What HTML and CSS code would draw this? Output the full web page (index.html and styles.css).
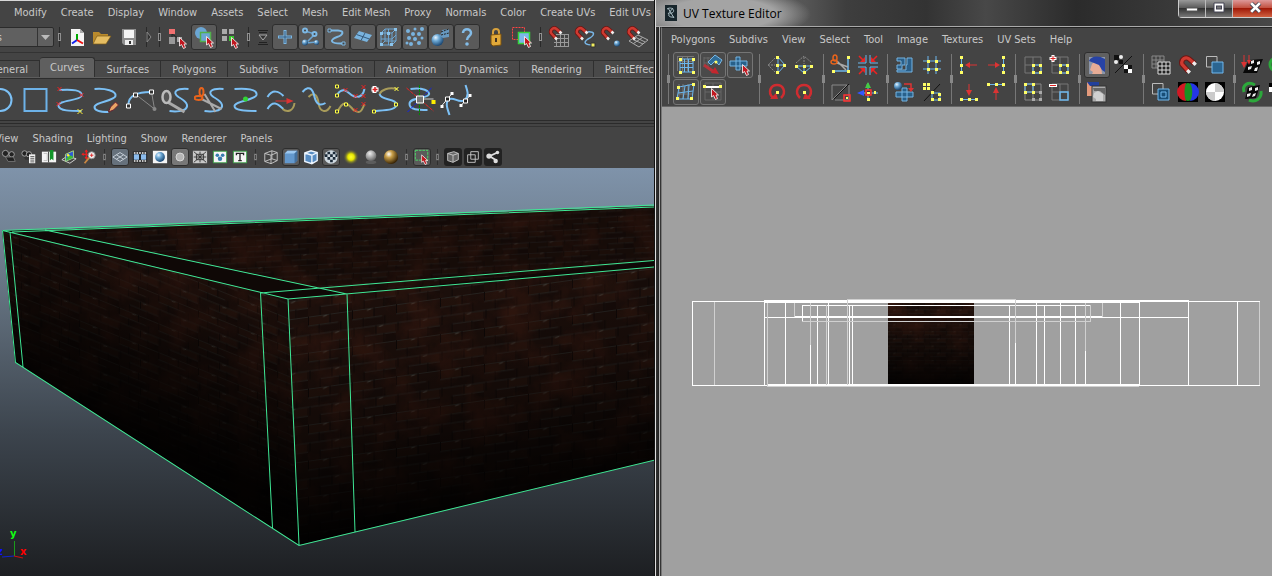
FILE: index.html
```html
<!DOCTYPE html>
<html lang="en">
<head>
    <meta charset="UTF-8">
    <meta name="viewport" content="width=device-width, initial-scale=1.0">
    <title>UV Texture Editor</title>
    <link rel="stylesheet" href="styles.css">
</head>
<body>
    <!-- shared shapes -->
    <svg class="defs" width="0" height="0">
        <defs>
            <symbol id="sep" viewBox="0 0 11 20"><path d="M5.500 0V20" stroke="#292929"/><rect x="4.500" y="6.500" width="2" height="7" fill="#333" stroke="#909090"/></symbol>
            <symbol id="cursor" viewBox="0 0 8 12"><path d="M.5 .5V9L2.500 7.500L4.500 11.500L6.500 10.500L5 7H7.500Z" fill="#c01820" stroke="#fff" stroke-width=".8"/></symbol>
            <symbol id="magnet" viewBox="0 0 16 16"><path d="M12.500 6.500L8.500 3C6 1 2 3 3 7L8 12.500" fill="none" stroke="#6d1512" stroke-width="4"/><path d="M12.500 6.500L8.500 3C6 1 2 3 3 7L8 12.500" fill="none" stroke="#cf3a31" stroke-width="2.500"/><path d="M11.500 5.500L13.500 7.500M7 11.500L9 13.500" stroke="#eee" stroke-width="2.500"/></symbol>
            <radialGradient id="ball" cx=".35" cy=".3" r=".7"><stop offset="0" stop-color="#e8f4ff"/><stop offset=".4" stop-color="#6eaad6"/><stop offset="1" stop-color="#1e4a75"/></radialGradient>
            <radialGradient id="grayBall" cx=".4" cy=".3" r=".7"><stop offset="0" stop-color="#eee"/><stop offset="1" stop-color="#666"/></radialGradient>
            <radialGradient id="goldBall" cx=".35" cy=".3" r=".7"><stop offset="0" stop-color="#fff"/><stop offset=".35" stop-color="#c9a04a"/><stop offset="1" stop-color="#3a2505"/></radialGradient>
            <radialGradient id="glow"><stop offset="0" stop-color="#ffff30"/><stop offset=".4" stop-color="#e6e600"/><stop offset="1" stop-color="#444" stop-opacity="0"/></radialGradient>
        </defs>
    </svg>

    <main class="main-window">
        <nav class="menu main-menu">
            <a href="#">Modify</a><a href="#">Create</a><a href="#">Display</a><a href="#">Window</a><a href="#">Assets</a><a href="#">Select</a><a href="#">Mesh</a><a href="#">Edit Mesh</a><a href="#">Proxy</a><a href="#">Normals</a><a href="#">Color</a><a href="#">Create UVs</a><a href="#">Edit UVs</a>
        </nav>

        <div class="status-line">
            <div class="mode-box">
                <select aria-label="Menu set"><option>Polygons</option></select>
                <svg viewBox="0 0 16 18"><path d="M.5 0V18" stroke="#333"/><path d="M4 7H13L8.500 12Z" fill="#bbb"/></svg>
            </div>
            <svg class="sep"><use href="#sep"/></svg>
            <button aria-label="New scene"><svg viewBox="0 0 24 24"><path d="M5 4H14L18 8V21H5Z" fill="#f4f4f4"/><path d="M14 4V8H18" fill="#aaa"/><path d="M11 9V15" stroke="#0a0" stroke-width="2"/><path d="M11 15L6 18.500" stroke="#12e" stroke-width="2"/><path d="M11 15L17 18.500" stroke="#e11" stroke-width="2"/></svg></button>
            <button aria-label="Open scene"><svg viewBox="0 0 24 24"><path d="M1 19V7H7L9 9H16V12H6Z" fill="#b98a2c"/><path d="M1 19L5 11H19L14 19Z" fill="#e5bd62" stroke="#7b5a17" stroke-width=".7"/></svg></button>
            <button aria-label="Save scene"><svg viewBox="0 0 24 24"><path d="M4 4H18V20H6L4 18Z" fill="#8e8e8e"/><rect x="6" y="5" width="10" height="8" fill="#f5f5f5"/><rect x="7" y="15" width="8" height="5" fill="#eee"/><rect x="11" y="16" width="2" height="3" fill="#333"/></svg></button>
            <svg class="sep" viewBox="0 0 11 20"><path d="M3.500 0V20" stroke="#2a2a2a"/><path d="M4 5L8 10L4 15Z" fill="#333" stroke="#888"/></svg>
            <svg class="sep"><use href="#sep"/></svg>
            <button aria-label="Select by hierarchy"><svg viewBox="0 0 24 24"><path d="M6 9V18M6 9L15 15" stroke="#222"/><rect x="3" y="4" width="6" height="5" fill="#f07070"/><rect x="3" y="12" width="6" height="7" fill="#999"/><rect x="11" y="12" width="5" height="5" fill="#aaa"/><use href="#cursor" x="13" y="12" width="8" height="12"/></svg></button>
            <button class="on" aria-label="Select by object"><svg viewBox="0 0 24 24"><circle cx="9" cy="8" r="6" fill="#6ba6d4"/><rect x="8.500" y="7.500" width="10" height="9" fill="#6ba6d4" stroke="#52b04c" stroke-width="1.500"/><use href="#cursor" x="14" y="11" width="8" height="12"/></svg></button>
            <button aria-label="Select by component"><svg viewBox="0 0 24 24"><path d="M4 4H9V9H4ZM11 4H16V9H11ZM4 11H9V16H4Z" fill="#aaa"/><rect x="11" y="11" width="5" height="5" fill="#39c42c"/><use href="#cursor" x="13" y="12" width="8" height="12"/></svg></button>
            <svg class="sep"><use href="#sep"/></svg>
            <svg class="collapse" viewBox="0 0 18 22"><path d="M4 4.500H14M5 6.500H13M5 16.500H13M4 18.500H14" stroke="#222"/><path d="M5 9H13L9 14Z" fill="#333" stroke="#aaa"/></svg>
            <button class="on" aria-label="Handles"><svg viewBox="0 0 24 24"><path d="M12 5V19M5 12H19" stroke="#7db8e4" stroke-width="3"/><path d="M12 6V18M6 12H18" stroke="#36597a"/></svg></button>
            <button class="on" aria-label="Joints"><svg viewBox="0 0 24 24"><path d="M6 6L16 9L7 18L17 17" fill="none" stroke="#6ca6d3" stroke-width="1.500"/><g fill="#444" stroke="#7db8e4" stroke-width="2"><circle cx="6" cy="5.500" r="2"/><circle cx="15.500" cy="9" r="2"/></g><circle cx="6" cy="17.500" r="3" fill="url(#ball)"/><circle cx="17.500" cy="17.500" r="2.500" fill="url(#ball)"/></svg></button>
            <button class="on" aria-label="Curves"><svg viewBox="0 0 24 24"><path d="M5 5.500H13C20 6 18 10 12 12C4 15 5 19 18 18.500" fill="none" stroke="#7db8e4" stroke-width="2"/><path d="M3 4H6V7H3ZM17 17H20V20H17Z" fill="#444" stroke="#7db8e4"/></svg></button>
            <button class="on" aria-label="Surfaces"><svg viewBox="0 0 24 24"><path d="M3 13L8 6L21 10L16 17Z" fill="#79b3de"/><path d="M5.500 9.500L18.500 14M14 8L10 15.500" stroke="#36597a"/></svg></button>
            <button class="on" aria-label="Deformers"><svg viewBox="0 0 24 24"><path d="M4 8H15V20H4ZM8 4H19V16H8ZM4 8L8 4M15 8L19 4M15 20L19 16M4 20L8 16M4 14H15L19 10M11.500 4V20" fill="none" stroke="#6ca6d3"/><path d="M3 7H6V10H3ZM10 7H13V10H10ZM17 3H20V6H17ZM3 18H6V21H3ZM13 18H16V21H13Z" fill="#8ac4ed"/></svg></button>
            <button class="on" aria-label="Dynamics"><svg viewBox="0 0 24 24"><g fill="#79b3de"><circle cx="5" cy="6" r="2"/><circle cx="12" cy="4" r="1.500"/><circle cx="19" cy="4" r="2"/><circle cx="10" cy="9" r="2"/><circle cx="16" cy="9" r="2"/><circle cx="6" cy="13" r="2"/><circle cx="12" cy="14" r="2"/><circle cx="19" cy="13" r="1.500"/><circle cx="8" cy="19" r="2"/><circle cx="4" cy="18" r="1.500"/><circle cx="16" cy="18" r="2"/></g></svg></button>
            <button class="on" aria-label="Rendering"><svg viewBox="0 0 24 24"><circle cx="8.500" cy="15" r="6" fill="url(#ball)"/><path d="M11 11L13 5L20 4V12L14 13Z" fill="#6799c0"/><path d="M12 7L20 4M12 10L20 8" stroke="#222" stroke-dasharray="2 1"/></svg></button>
            <button class="on" aria-label="Miscellaneous"><svg viewBox="0 0 24 24"><path d="M8 8C8 3 16 3 16 8C16 11 12 11 12 15" fill="none" stroke="#83bce8" stroke-width="2.500"/><circle cx="12" cy="19" r="1.800" fill="#83bce8"/></svg></button>
            <button class="gap" aria-label="Lock selection"><svg viewBox="0 0 24 24"><path d="M9 11V7C9 3 15 3 15 7V11" fill="none" stroke="#d8a23c" stroke-width="2"/><path d="M7 10L17 9V20L9 21L7 19Z" fill="#e2a939" stroke="#7b5210"/><path d="M12 13V17" stroke="#432" stroke-width="2"/></svg></button>
            <button aria-label="Highlight selection"><svg viewBox="0 0 24 24"><rect x="2.500" y="2.500" width="12" height="12" fill="none" stroke="#f44" stroke-dasharray="2 1"/><rect x="8.500" y="7.500" width="11" height="11" fill="#7cb7e8" stroke="#35d43b" stroke-width="1.500"/><use href="#cursor" x="14" y="11" width="8" height="12"/></svg></button>
            <svg class="sep"><use href="#sep"/></svg>
            <button aria-label="Snap to grids"><svg viewBox="0 0 24 24"><path d="M9 9.500H22M9 13.500H22M7 17.500H22M7 21.500H22M9.500 12V22M13.500 9V22M17.500 9V22M21.500 9V22" stroke="#999"/><use href="#magnet" x="1" y="1" width="16" height="16"/></svg></button>
            <button aria-label="Snap to curves"><svg viewBox="0 0 24 24"><path d="M14 7C24 6 21 11 15 14C9 18 13 20 20 20" fill="none" stroke="#78b5e5" stroke-width="1.500"/><path d="M18 18H22V22H18Z" fill="#f1ed60" stroke="#333"/><use href="#magnet" x="1" y="1" width="16" height="16"/></svg></button>
            <button aria-label="Snap to points"><svg viewBox="0 0 24 24"><circle cx="18" cy="18.500" r="3" fill="url(#ball)"/><use href="#magnet" x="1" y="1" width="16" height="16"/></svg></button>
            <button aria-label="Snap to view planes"><svg viewBox="0 0 24 24"><path d="M4 16L13 10L23 15L14 22ZM7 14L18 19M10 12L20 17M8.500 18.500L17.500 12.500" fill="none" stroke="#aaa"/><use href="#magnet" x="1" y="1" width="16" height="16"/></svg></button>
        </div>

        <div class="shelf-tabs" role="tablist">
            <button role="tab">General</button><button role="tab" aria-selected="true">Curves</button><button role="tab">Surfaces</button><button role="tab">Polygons</button><button role="tab">Subdivs</button><button role="tab">Deformation</button><button role="tab">Animation</button><button role="tab">Dynamics</button><button role="tab">Rendering</button><button role="tab">PaintEffects</button>
        </div>

        <div class="shelf">
            <button aria-label="Circle"><svg viewBox="0 0 32 32"><circle cx="16" cy="16" r="11" fill="none" stroke="#7cc0f5" stroke-width="2"/></svg></button>
            <button aria-label="Square"><svg viewBox="0 0 32 32"><rect x="5" y="5" width="22" height="22" fill="none" stroke="#6db2e8" stroke-width="2"/></svg></button>
            <button aria-label="EP curve"><svg viewBox="0 0 32 32"><path d="M5 6C17 5 29 6 27 12C25 17 3 16 4 22C5 27 16 27 27 27" fill="none" stroke="#7cc0f5" stroke-width="2"/><path d="M3 3L7 7M7 3L3 7M25 9L29 13M29 9L25 13M2 18L6 22M6 18L2 22" stroke="#e22"/><path d="M23 25L28 30M28 25L23 30" stroke="#fe3"/></svg></button>
            <button aria-label="Pencil curve"><svg viewBox="0 0 32 32"><path d="M5 5C16 4 27 7 26 12C25 17 5 18 5 23C5 27 13 28 19 28" fill="none" stroke="#7cc0f5" stroke-width="2"/><path d="M19 28L21 23L26 18L29 21L24 26Z" fill="#e9a565" stroke="#623"/></svg></button>
            <button aria-label="Arc"><svg viewBox="0 0 32 32"><path d="M27 8L30 25L12 11" fill="none" stroke="#888"/><path d="M4 22C3 11 14 8 26 8" fill="none" stroke="#7cc0f5" stroke-width="2"/><path d="M2 20H6V24H2ZM9 9H13V13H9ZM25 6H29V10H25Z" fill="#333" stroke="#fff"/><circle cx="30" cy="25" r="2" fill="#888"/></svg></button>
            <button aria-label="Attach curves"><svg viewBox="0 0 32 32"><path d="M29 5C17 4 12 8 19 13C26 17 30 21 26 25C24 27 17 28 10 27" fill="none" stroke="#7cc0f5" stroke-width="2"/><path d="M8 18L25 28" stroke="#aaa" stroke-width="3"/><ellipse cx="7" cy="13" rx="4" ry="6" fill="#555" stroke="#bbb" stroke-width="2.500"/></svg></button>
            <button aria-label="Detach curves"><svg viewBox="0 0 32 32"><path d="M29 5C17 4 12 8 19 13C26 17 30 21 26 25C24 27 17 28 10 27" fill="none" stroke="#7cc0f5" stroke-width="2"/><path d="M10 10L21 28M7 15L27 25" stroke="#aaa" stroke-width="2"/><ellipse cx="7" cy="8" rx="2" ry="4" fill="none" stroke="#e9641c" stroke-width="2"/><ellipse cx="4" cy="14" rx="4" ry="2" fill="none" stroke="#e9641c" stroke-width="2"/></svg></button>
            <button aria-label="Insert knot"><svg viewBox="0 0 32 32"><path d="M5 5C16 4 28 5 27 11C26 16 5 17 5 22C5 27 18 27 27 27" fill="none" stroke="#7cc0f5" stroke-width="2"/><circle cx="16" cy="15" r="2.500" fill="#32d436"/></svg></button>
            <button aria-label="Extend curve"><svg viewBox="0 0 32 32"><path d="M3 13C8 5 14 7 19 12M3 25C9 15 14 21 19 25" fill="none" stroke="#7cc0f5" stroke-width="2"/><path d="M18 25C23 29 29 27 30 19" fill="none" stroke="#a89b5a" stroke-width="2"/><path d="M11 17H24" stroke="#d33"/><path d="M22 14L29 17L22 20Z" fill="#d33"/></svg></button>
            <button aria-label="Offset curve"><svg viewBox="0 0 32 32"><path d="M9 13C15 7 18 12 19 19C20 28 27 30 31 22" fill="none" stroke="#a89b5a" stroke-width="2"/><path d="M3 8C11 -1 14 8 15 13C17 21 21 22 26 19" fill="none" stroke="#7cc0f5" stroke-width="2"/></svg></button>
            <button aria-label="Align curves"><svg viewBox="0 0 32 32"><path d="M3 10C11 0 15 13 22 13C27 13 29 10 30 5" fill="none" stroke="#7cc0f5" stroke-width="2"/><path d="M3 28C9 14 14 20 19 26C25 30 27 28 30 20" fill="none" stroke="#a89b5a" stroke-width="2"/><path d="M1 1H4V4H1ZM1 10H4V13H1ZM1 26H4V29H1ZM10 19H13V22H10Z" fill="#333" stroke="#ff4"/><path d="M9 4L13 8M13 4L9 8M19 10L23 14M23 10L19 14M27 1L31 5M31 1L27 5M27 10L31 14M31 10L27 14M19 24L23 28M23 24L19 28M27 18L31 22M31 18L27 22" stroke="#e22"/></svg></button>
            <button aria-label="Add points"><svg viewBox="0 0 32 32"><path d="M28 5C18 3 12 6 10 10" fill="none" stroke="#a89b5a" stroke-width="2"/><path d="M10 10C12 17 26 14 27 20C27 26 18 26 5 27" fill="none" stroke="#7cc0f5" stroke-width="2"/><path d="M5 2V9M2 5.500H9" stroke="#fff" stroke-width="4"/><path d="M5.500 3V8M3 5.500H8" stroke="#d22" stroke-width="1.500"/><path d="M25 19H28V22H25ZM3 26H6V29H3Z" fill="#333" stroke="#ff4"/><path d="M25 3L29 7M29 3L25 7" stroke="#ff4"/></svg></button>
            <button aria-label="Curve editing"><svg viewBox="0 0 32 32"><path d="M6 5C17 3 27 7 24 11C21 15 5 13 5 20C5 26 14 26 23 26" fill="none" stroke="#7cc0f5" stroke-width="2"/><path d="M15 1V31" stroke="#080" stroke-dasharray="3 1"/><path d="M2 4L29 27" stroke="#e22" stroke-dasharray="4 1"/><path d="M27 4L3 28" stroke="#12e" stroke-dasharray="4 1"/><path d="M16 15H29" stroke="#ccc"/><path d="M12 12H19V19H12Z" fill="#777" stroke="#fff"/><rect x="27" y="16" width="4" height="4" fill="#fe0"/></svg></button>
            <button aria-label="Bezier curve"><svg viewBox="0 0 32 32"><path d="M10 31C8 25 5 18 10 15C15 13 20 20 25 16C30 12 28 7 26 1" fill="none" stroke="#7cc0f5" stroke-width="2"/><path d="M2 22L13 9M21 22L31 11" stroke="#eee"/><path d="M6 13H10V17H6ZM24 15H28V19H24Z" fill="#222" stroke="#fff"/><path d="M1 21H4V24H1ZM11 8H14V11H11ZM20 20H23V23H20ZM29 10H32V13H29Z" fill="#fff"/></svg></button>
        </div>

        <nav class="menu panel-menu">
            <a href="#">View</a><a href="#">Shading</a><a href="#">Lighting</a><a href="#">Show</a><a href="#">Renderer</a><a href="#">Panels</a>
        </nav>

        <div class="panel-tools">
            <button aria-label="Select camera"><svg viewBox="0 0 18 18"><circle cx="5" cy="5" r="3.500" fill="#222" stroke="#aaa"/><circle cx="12" cy="6" r="3" fill="#222" stroke="#aaa"/><path d="M5 9L14 9L16 14L8 14Z" fill="#222" stroke="#777"/></svg></button>
            <button aria-label="Camera attributes"><svg viewBox="0 0 18 18"><circle cx="4" cy="5" r="3" fill="#222" stroke="#aaa"/><circle cx="9" cy="6" r="3" fill="#222" stroke="#aaa"/><path d="M3 9H9V12H5Z" fill="#333"/><path d="M9 6H16V16H9Z" fill="#f2f2f2"/><path d="M10.500 8.500H15M10.500 10.500H15M10.500 12.500H15M10.500 14.500H15" stroke="#555"/></svg></button>
            <button aria-label="Bookmarks"><svg viewBox="0 0 18 18"><path d="M1 3H17V15H1Z" fill="#f4f4f4"/><path d="M3 5H7V13H3" fill="none" stroke="#bbb"/><path d="M8.500 3V15" stroke="#333"/><path d="M10 1H14V13L12 11L10 13Z" fill="#12962a"/></svg></button>
            <button aria-label="Image plane"><svg viewBox="0 0 18 18"><path d="M1 12L7 8L17 11L10 16Z" fill="none" stroke="#ddd"/><path d="M5 6L14 2V10L5 14Z" fill="#2f57d8" stroke="#aee07c"/><path d="M6 11L9 7L13 8V10L6 13Z" fill="#3bbf2f"/><circle cx="8" cy="7" r="1.500" fill="#fe3"/></svg></button>
            <button aria-label="Pan and zoom"><svg viewBox="0 0 18 18"><path d="M6 1V11M1 6H11" stroke="#d22" stroke-width="1.500"/><path d="M4 3L6 .500L8 3ZM4 9L6 12L8 9ZM3 4L.500 6L3 8Z" fill="#e22"/><circle cx="12" cy="7" r="4" fill="#eee" stroke="#888"/><path d="M12 5V9M10 7H14" stroke="#d22"/><path d="M9 10L4 16" stroke="#c98742" stroke-width="2"/></svg></button>
            <svg class="sep"><use href="#sep"/></svg>
            <button class="on cool" aria-label="Grid"><svg viewBox="0 0 18 18"><path d="M1 9L9 4L17 9L9 14ZM5 6.500L13 11.500M13 6.500L5 11.500" fill="none" stroke="#cdd6df"/></svg></button>
            <button aria-label="Film gate"><svg viewBox="0 0 18 18"><rect x="1" y="3" width="16" height="12" fill="#111"/><path d="M2 4.500H17M2 13.500H17" stroke="#fff" stroke-width="1.500" stroke-dasharray="2 1"/><path d="M2 6H8V12H2ZM10 6H16V12H10Z" fill="#8cbced"/></svg></button>
            <button aria-label="Resolution gate"><svg viewBox="0 0 18 18"><rect x="1" y="2" width="16" height="14" fill="#f5f5f5"/><circle cx="9" cy="9" r="5.500" fill="url(#ball)"/></svg></button>
            <button class="on light" aria-label="Gate mask"><svg viewBox="0 0 18 18"><circle cx="9" cy="9" r="4.500" fill="#b5b5b5" stroke="#ddd"/></svg></button>
            <button aria-label="Field chart"><svg viewBox="0 0 18 18"><rect x="1" y="2" width="16" height="14" fill="#c8c8c8"/><path d="M2 3L16 15M16 3L2 15M9 3V15M2 9H16M5 6H13V12H5Z" fill="none" stroke="#333"/></svg></button>
            <button aria-label="Safe action"><svg viewBox="0 0 18 18"><rect x="1.500" y="2.500" width="15" height="13" fill="#f5f5f5" stroke="#3da348"/><circle cx="6" cy="7" r="2" fill="#367cae"/><circle cx="12" cy="7" r="2" fill="#367cae"/><circle cx="9" cy="11" r="2.500" fill="#367cae"/></svg></button>
            <button aria-label="Safe title"><svg viewBox="0 0 18 18"><rect x="1.500" y="2.500" width="15" height="13" fill="#f5f5f5" stroke="#3da348"/><path d="M5 7V5H13V7M9 5V13M7 13H11" fill="none" stroke="#222" stroke-width="1.500"/></svg></button>
            <svg class="sep"><use href="#sep"/></svg>
            <button aria-label="Wireframe"><svg viewBox="0 0 18 18"><path d="M2 5L10 2L16 4V13L9 16.500L2 14ZM2 5L9 7L16 4M9 7V16.500M10 2V11L2 14M10 11L16 13" fill="none" stroke="#ccc"/></svg></button>
            <button class="on" aria-label="Shaded"><svg viewBox="0 0 18 18"><path d="M2 5L5 2H16V13L13 16H2Z" fill="#6398cd"/><path d="M2 5L5 2H16L13 5Z" fill="#9cc7ef"/><path d="M13 5L16 2V13L13 16Z" fill="#43709e"/></svg></button>
            <button aria-label="Wireframe on shaded"><svg viewBox="0 0 18 18"><path d="M2 4.500L9 2L16 4V13L10 16.500L2 14Z" fill="#578cc2"/><path d="M2 4.500L9 2L16 4V13L10 16.500L2 14ZM2 4.500L10 7L16 4M10 7V16.500" fill="none" stroke="#eef6ff" stroke-width="1.500"/></svg></button>
            <button class="on" aria-label="Textured"><svg viewBox="0 0 18 18"><circle cx="9" cy="9" r="7.500" fill="#cfd9e0"/><path d="M5 3H8V6H5ZM11 3H14V6H11ZM2 6H5V9H2ZM8 6H11V9H8ZM5 9H8V12H5ZM11 9H14V12H11ZM8 12H11V15H8ZM14 6H16V9H14Z" fill="#1b2a38"/></svg></button>
            <button aria-label="Use all lights"><svg viewBox="0 0 18 18"><circle cx="9" cy="9" r="9" fill="url(#glow)"/></svg></button>
            <button aria-label="Shadows"><svg viewBox="0 0 18 18"><ellipse cx="9" cy="15" rx="6" ry="2" fill="#5c5c5c"/><circle cx="9" cy="7.500" r="6" fill="url(#grayBall)"/></svg></button>
            <button aria-label="High quality"><svg viewBox="0 0 18 18"><circle cx="9" cy="9" r="8" fill="url(#goldBall)"/></svg></button>
            <svg class="sep"><use href="#sep"/></svg>
            <button class="on" aria-label="Isolate select"><svg viewBox="0 0 18 18"><rect x="1.500" y="1.500" width="14" height="11" fill="none" stroke="#4ae668" stroke-dasharray="3 1"/><use href="#cursor" x="8" y="6" width="8" height="12"/></svg></button>
            <svg class="sep"><use href="#sep"/></svg>
            <button class="dark" aria-label="X-ray"><svg viewBox="0 0 18 18"><path d="M3 5L10 3L15 5V12L9 15L3 13Z" fill="#666"/><path d="M3 5L10 3L15 5V12L9 15L3 13ZM3 5L9 7L15 5M9 7V15" fill="none" stroke="#ccc"/></svg></button>
            <button class="dark" aria-label="X-ray components"><svg viewBox="0 0 18 18"><path d="M3 6.500H11.500V15H3ZM6.500 3H15V11.500H6.500Z" fill="none" stroke="#ccc"/></svg></button>
            <button class="dark" aria-label="X-ray joints"><svg viewBox="0 0 18 18"><path d="M14 4L5 8L13 13" fill="none" stroke="#ddd" stroke-width="2"/><circle cx="14" cy="4" r="2" fill="#ddd"/><circle cx="4.500" cy="8" r="3" fill="#ddd"/><circle cx="12" cy="13.500" r="2.500" fill="#ddd"/></svg></button>
        </div>

        <svg class="viewport" viewBox="0 168 654 408" preserveAspectRatio="xMinYMin slice" role="img" aria-label="Perspective view">
            <defs>
                <pattern id="brick" width="44" height="36" patternUnits="userSpaceOnUse">
                    <rect width="44" height="36" fill="#1c0f0b"/>
                    <rect x="1" y="1" width="20" height="8" fill="#22120c"/>
                    <rect x="12" y="10" width="20" height="8" fill="#180d0a"/>
                    <rect x="23" y="19" width="20" height="8" fill="#24130d"/>
                    <rect x="33" y="28" width="11" height="8" fill="#170c09"/>
                    <path d="M0 .5H44M0 9.500H30M0 18.500H44M12 27.500H44" stroke="#262320"/>
                    <path d="M.5 0V9M22 0V9M11 9V18M33 9V18M2 18V27M24 18V27M12 27V36M32 27V36" stroke="#0e0807"/>
                    <path d="M15 2L19 1M27 20L31 19" stroke="#45403a"/>
                </pattern>
                <pattern id="brickLeft" href="#brick" patternTransform="skewY(22) scale(.9 .8)"/>
                <pattern id="brickFront" href="#brick" patternTransform="skewY(-8)"/>
                <pattern id="brickBack" href="#brick" patternTransform="skewY(-3) scale(.8 .6)"/>
                <linearGradient id="fadeLeft" gradientUnits="userSpaceOnUse" x1="170" y1="270" x2="105" y2="420"><stop offset="0" stop-opacity=".15"/><stop offset="1" stop-opacity=".92"/></linearGradient>
                <linearGradient id="fadeFront" gradientUnits="userSpaceOnUse" x1="440" y1="285" x2="480" y2="510"><stop offset="0" stop-opacity="0"/><stop offset=".5" stop-opacity=".3"/><stop offset="1" stop-opacity=".95"/></linearGradient>
                <filter id="grain" x="0" y="0" width="100%" height="100%" color-interpolation-filters="sRGB">
                    <feTurbulence type="fractalNoise" baseFrequency=".03" numOctaves="6" seed="8"/>
                    <feColorMatrix values="0 0 0 0 .25  0 0 0 0 .11  0 0 0 0 .07  2.5 0 0 0 -1"/>
                    <feComposite in2="SourceGraphic" operator="in"/>
                </filter>
            </defs>
            <path d="M45 230L655 206V263L347 294Z" fill="url(#brickBack)"/>
            <path d="M2 230L288 299L299 545L15 362Z" fill="url(#brickLeft)"/>
            <path d="M288 299L655 266V460L299 545Z" fill="url(#brickFront)"/>
            <path d="M2 230L655 206V460L299 545L15 362Z" filter="url(#grain)" opacity=".5"/>
            <path d="M45 230L655 206V263L347 294Z" opacity=".2"/>
            <path d="M2 230L288 299L299 545L15 362Z" fill="url(#fadeLeft)"/>
            <path d="M288 299L655 266V460L299 545Z" fill="url(#fadeFront)"/>
            <path d="M2 230L45 230L347 294L655 261V267L288 299Z" fill="#0f0806"/>
            <path class="edge" d="M2.500 230.500L655 205M12 232L655 207M2.500 230.500L288 299L655 267M45 230L347 294M260 293L655 260.500M2.500 230.500L15.500 362.500L299 545.500L655 460M10 232L23 367M260.500 293L272.500 528M288 299L299 545M347 294L355 532"/>
            <path d="M14.500 541V556" stroke="#1b9c1b"/><path d="M14 556L23 558" stroke="#c11"/><path d="M14 556L2 557" stroke="#12c"/>
            <g class="axis"><text x="10" y="537" fill="#1f1">y</text><text x="20" y="555" fill="#f00">x</text><text x="-3" y="555" fill="#11f">z</text></g>
        </svg>
    </main>

    <section class="uv-window">
        <header class="title-bar">
            <svg class="app-icon" viewBox="0 0 12 16"><rect width="12" height="16" fill="#18262c"/><path d="M2 4C7 1 11 6 7 8C1 9 4 13 9 12M3 3L9 13M8 3L3 9" fill="none" stroke="#a9bcc2"/></svg>
            <h1>UV Texture Editor</h1>
            <div class="window-buttons">
                <button aria-label="Minimize"><svg viewBox="0 0 14 12"><rect x="1.500" y="6.500" width="11" height="3" fill="#fff" stroke="#555"/></svg></button>
                <button aria-label="Maximize"><svg viewBox="0 0 14 12"><path d="M2 1.500H12V10.500H2Z" fill="#fff" stroke="#445"/><rect x="4.500" y="4.500" width="5" height="3" fill="#777" stroke="#445"/></svg></button>
                <button class="close" aria-label="Close"><svg viewBox="0 0 14 12"><path d="M3 2L11 10M11 2L3 10" stroke="#445" stroke-width="4"/><path d="M3 2L11 10M11 2L3 10" stroke="#fff" stroke-width="2.500"/></svg></button>
            </div>
        </header>

        <div class="uv-body">
            <nav class="menu uv-menu">
                <a href="#">Polygons</a><a href="#">Subdivs</a><a href="#">View</a><a href="#">Select</a><a href="#">Tool</a><a href="#">Image</a><a href="#">Textures</a><a href="#">UV Sets</a><a href="#">Help</a>
            </nav>

            <div class="uv-tools">
                <div class="group">
                    <button class="on" aria-label="Lattice"><svg viewBox="0 0 24 24"><path d="M3.500 3V18M8.500 3V18M13.500 3V18M3 3.500H20M3 8.500H20" stroke="#777"/><path d="M6 6H19V19H6ZM6 10.500H19M6 14.500H19M10.500 6V19M14.500 6V19" fill="none" stroke="#6cb6ec"/><path d="M5 5H8V8H5ZM18 5H21V8H18ZM5 18H8V21H5ZM18 18H21V21H18Z" fill="#ff6"/></svg></button>
                    <button class="on" aria-label="Smooth"><svg viewBox="0 0 24 24"><path d="M3 4V14M7 4V14M3 5H12M3 10H12" stroke="#666"/><path d="M7 9L14 2L21 7L18 12L14 8L10 12Z" fill="#2f6c98" stroke="#7bb8e4"/><path d="M3 12L13 19" stroke="#b5333a" stroke-width="3"/><path d="M10 20L18 21L14 14Z" fill="#c5262d"/><circle cx="15" cy="9" r="1.500" fill="#ff6"/></svg></button>
                    <button class="on" aria-label="Select shell"><svg viewBox="0 0 24 24"><path d="M8 4H12V8H19V13H12V17H8V13H2V8H8Z" fill="#28608a" stroke="#75b4e2"/><path d="M8 8H12V13H8Z" fill="none" stroke="#75b4e2"/><use href="#cursor" x="14" y="11" width="8" height="12"/></svg></button>
                    <button class="on" aria-label="Smudge"><svg viewBox="0 0 24 24"><path d="M5 4V19M9 4V19M14 4V19M5 14H19" stroke="#777"/><path d="M3 19L5 7L20 4L18 19ZM4 13L19 11M9 19L11 6M14 19L15 5" fill="none" stroke="#6cb6ec"/><path d="M3 6H6V9H3ZM18 3H21V6H18ZM2 17H5V20H2ZM16 17H19V20H16Z" fill="#ff6"/></svg></button>
                    <button class="on" aria-label="Shortest edge path"><svg viewBox="0 0 24 24"><path d="M4 3H20V20H4ZM4 12H20M12 3V20" fill="none" stroke="#666"/><path d="M4 7H20" stroke="#fff" stroke-width="2"/><path d="M2 5H5V8H2ZM18 5H21V8H18Z" fill="#ff6"/><use href="#cursor" x="10" y="8" width="8" height="12"/></svg></button>
                </div>
                <div class="group">
                    <button aria-label="Flip U"><svg viewBox="0 0 24 24"><path d="M10 5L3 12L10 19M3 12H10" fill="none" stroke="#888" stroke-dasharray="2 1"/><path d="M13 4L20 12L13 20ZM13 12H20" fill="none" stroke="#6cb6ec"/><path d="M11 3H14V6H11ZM18 11H21V14H18ZM11 11H14V14H11ZM11 18H14V21H11Z" fill="#ff6"/></svg></button>
                    <button aria-label="Rotate counterclockwise"><svg viewBox="0 0 24 24"><path d="M8 18C2 12 6 5 12 5C18 5 22 12 16 18" fill="none" stroke="#cf2c30" stroke-width="2.500"/><path d="M5 19H13L11 13Z" fill="#cf2c30"/><path d="M11 11H14V14H11Z" fill="#ff6"/></svg></button>
                    <button aria-label="Flip V"><svg viewBox="0 0 24 24"><path d="M4 10L12 3L20 10M12 4V11" fill="none" stroke="#888" stroke-dasharray="2 1"/><path d="M4 13H20L12 20ZM12 13V20" fill="none" stroke="#6cb6ec"/><path d="M3 12H6V15H3ZM11 12H14V15H11ZM18 12H21V15H18ZM11 18H14V21H11Z" fill="#ff6"/></svg></button>
                    <button aria-label="Rotate clockwise"><svg viewBox="0 0 24 24"><path d="M8 18C2 12 6 5 12 5C18 5 22 12 16 18" fill="none" stroke="#cf2c30" stroke-width="2.500"/><path d="M19 19H11L13 13Z" fill="#cf2c30"/><path d="M11 11H14V14H11Z" fill="#ff6"/></svg></button>
                </div>
                <div class="group">
                    <button aria-label="Cut UVs"><svg viewBox="0 0 24 24"><path d="M19 4V18H5" fill="none" stroke="#6cb6ec" stroke-width="1.500"/><path d="M8 8L17 17M8 10L19 14" stroke="#aaa" stroke-width="1.500"/><ellipse cx="6" cy="5" rx="2" ry="3" fill="none" stroke="#e9641c" stroke-width="1.500"/><ellipse cx="5" cy="9" rx="3" ry="2" fill="none" stroke="#e9641c" stroke-width="1.500"/><path d="M18 3H21V6H18ZM3 17H6V20H3ZM18 17H21V20H18Z" fill="#ff6"/></svg></button>
                    <button aria-label="Split UVs"><svg viewBox="0 0 24 24"><path d="M3 5V20L18 5H3M6 20H20V5" fill="none" stroke="#888"/><path d="M5 19L20 4" stroke="#111"/><path d="M15 15H21V21H15Z" fill="none" stroke="#f33" stroke-width="1.500"/><path d="M17 17H19V19H17Z" fill="#ff6"/></svg></button>
                    <button aria-label="Sew UVs"><svg viewBox="0 0 24 24"><path d="M10 2V10H2M14 2V10H22M10 22V14H2M14 22V14H22" fill="none" stroke="#6cb6ec"/><path d="M3 3L8 8M21 3L16 8M3 21L8 16M21 21L16 16" stroke="#e22" stroke-width="1.500"/><path d="M9 9V4L4 9ZM15 9V4L20 9ZM9 15V20L4 15ZM15 15V20L20 15Z" fill="#e22"/></svg></button>
                    <button aria-label="Move and sew"><svg viewBox="0 0 24 24"><path d="M12 3V21M4 13H22" stroke="#6cb6ec"/><path d="M9 8L12 2L15 8Z" fill="#4c4"/><path d="M8 10V16L1 13Z" fill="#35f"/><path d="M10 10H15V15H10Z" fill="#333" stroke="#f33" stroke-width="1.500"/><path d="M11 4V8" stroke="#4c4"/><path d="M18 11H20V14H18ZM11 18H14V21H11ZM11 12H14V14H11Z" fill="#ff6"/></svg></button>
                </div>
                <div class="group">
                    <button aria-label="Layout UVs"><svg viewBox="0 0 24 24"><path d="M4 5H12V12H9V16H4V12H8V8H4ZM14 5H19V19H4V17H13V12H14Z" fill="#2a5f89" stroke="#75b4e2"/></svg></button>
                    <button aria-label="Unfold"><svg viewBox="0 0 24 24"><path d="M9 8H14V12H20V17H14V21H9V17H3V12H9Z" fill="#28608a" stroke="#75b4e2"/><path d="M9 12H14V17H9Z" fill="none" stroke="#75b4e2"/><circle cx="5" cy="6" r="4" fill="url(#ball)"/><path d="M11 4H18V9" fill="none" stroke="#d33" stroke-width="1.500"/><path d="M15 8H21L18 12Z" fill="#d33"/></svg></button>
                    <button aria-label="Grid UVs"><svg viewBox="0 0 24 24"><path d="M8 3V21M16 3V21M3 8H21M3 16H21" stroke="#6cb6ec"/><path d="M7 7H10V10H7ZM15 7H18V10H15ZM7 15H10V18H7ZM15 15H18V18H15Z" fill="#ff6"/></svg></button>
                    <button aria-label="Relax UVs"><svg viewBox="0 0 24 24"><path d="M3 3H6V6H3ZM7 3H10V6H7ZM3 7H6V10H3ZM7 7H10V10H7Z" fill="#ff6"/><path d="M4 21L20 4" stroke="#111"/><path d="M12 13H20V20H12Z" fill="none" stroke="#6cb6ec"/><path d="M11 11H14V14H11ZM18 13H21V16H18ZM11 18H14V21H11ZM18 18H21V21H18Z" fill="#ff6"/></svg></button>
                </div>
                <div class="group">
                    <button aria-label="Align left"><svg viewBox="0 0 24 24"><path d="M4.500 4V20" stroke="#6cb6ec"/><path d="M3 3H6V6H3ZM3 11H6V14H3ZM3 18H6V21H3Z" fill="#ff6"/><path d="M10 12H20" stroke="#d33"/><path d="M8 12L13 9V15Z" fill="#d33"/></svg></button>
                    <button aria-label="Align bottom"><svg viewBox="0 0 24 24"><path d="M4 19.500H20" stroke="#6cb6ec"/><path d="M3 18H6V21H3ZM11 18H14V21H11ZM18 18H21V21H18Z" fill="#ff6"/><path d="M12 4V13" stroke="#d33"/><path d="M9 10H15L12 16Z" fill="#d33"/></svg></button>
                    <button aria-label="Align right"><svg viewBox="0 0 24 24"><path d="M19.500 4V20" stroke="#6cb6ec"/><path d="M18 3H21V6H18ZM18 11H21V14H18ZM18 18H21V21H18Z" fill="#ff6"/><path d="M4 12H14" stroke="#d33"/><path d="M16 12L11 9V15Z" fill="#d33"/></svg></button>
                    <button aria-label="Align top"><svg viewBox="0 0 24 24"><path d="M4 4.500H20" stroke="#6cb6ec"/><path d="M3 3H6V6H3ZM11 3H14V6H11ZM18 3H21V6H18Z" fill="#ff6"/><path d="M12 11V20" stroke="#d33"/><path d="M9 13H15L12 7Z" fill="#d33"/></svg></button>
                </div>
                <div class="group">
                    <button aria-label="Isolate"><svg viewBox="0 0 24 24"><path d="M4 4H20V20H4ZM12 4V20M4 12H20" fill="none" stroke="#777"/><path d="M12 12H20V20H12Z" fill="none" stroke="#6cb6ec"/><path d="M11 11H14V14H11ZM18 11H21V14H18ZM11 18H14V21H11ZM18 18H21V21H18Z" fill="#ff6"/></svg></button>
                    <button aria-label="Isolate remove"><svg viewBox="0 0 24 24"><path d="M4 4H20V20H4ZM12 4V20M4 12H20" fill="none" stroke="#888"/><path d="M4 4H12V12H4Z" fill="none" stroke="#6cb6ec"/><path d="M3 3H6V6H3ZM11 3H14V6H11ZM3 11H6V14H3ZM11 11H14V14H11Z" fill="#ff6"/><path d="M18 11H21V14H18ZM11 18H14V21H11ZM18 18H21V21H18Z" fill="#aaa"/></svg></button>
                    <button aria-label="Add to isolation"><svg viewBox="0 0 24 24"><path d="M4 4H20V20H4ZM12 4V20M4 12H20" fill="none" stroke="#777"/><path d="M12 12H20V20H12Z" fill="none" stroke="#6cb6ec"/><path d="M11 11H14V14H11ZM18 11H21V14H18ZM11 18H14V21H11ZM18 18H21V21H18Z" fill="#ff6"/><path d="M5 2V9M1.500 5.500H8.500" stroke="#fff" stroke-width="3"/><path d="M5 3V8M2.500 5.500H7.500" stroke="#d22"/></svg></button>
                    <button aria-label="Remove from isolation"><svg viewBox="0 0 24 24"><path d="M4 4H20V20H4ZM12 4V20M4 12H20" fill="none" stroke="#777"/><path d="M12 12H20V20H12Z" fill="none" stroke="#6cb6ec" stroke-width="1.500"/><path d="M1 5.500H9" stroke="#fff" stroke-width="3"/><path d="M2 5.500H8" stroke="#d22"/></svg></button>
                </div>
                <div class="group">
                    <button class="on light" aria-label="Display image"><svg viewBox="0 0 24 24"><rect x="4" y="4" width="16" height="17" fill="#8c96a8"/><path d="M7 21L8 19L5 17L7 11L10 8L16 12L17 21Z" fill="#e6ac96"/><path d="M4 8C6 3 13 2 20 6V19L17 17L14 12L9 10Z" fill="#2743a5"/></svg></button>
                    <button aria-label="Display channels"><svg viewBox="0 0 24 24"><rect x="2" y="2" width="12" height="14" fill="#e39a7c"/><path d="M2 2H14V6H5Z" fill="#22409c"/><rect x="7" y="6" width="14" height="16" fill="#aaa" stroke="#333"/><path d="M8 8H20V15L15 11H9Z" fill="#666"/><path d="M9 13L8 17L11 19V21H18V14L13 11Z" fill="#d0d0d0"/></svg></button>
                    <button aria-label="Toggle filtered image"><svg viewBox="0 0 24 24"><path d="M2 2H7V7H2ZM7 7H11V11H7Z" fill="#111"/><circle cx="9" cy="4" r="2" fill="#eee"/><circle cx="4" cy="9" r="2" fill="#eee"/><path d="M3 20L20 3" stroke="#111"/><path d="M12 12H20V20H12Z" fill="#fff"/><path d="M16 12H20V16H16ZM12 16H16V20H12Z" fill="#111"/></svg></button>
                </div>
                <div class="group">
                    <button aria-label="View grid"><svg viewBox="0 0 24 24"><path d="M3 3H15V15H3ZM3 7H15M3 11H15M7 3V15M11 3V15" fill="none" stroke="#888"/><path d="M9 9H21V21H9ZM9 13H21M9 17H21M13 9V21M17 9V21" fill="#222" stroke="#ddd"/></svg></button>
                    <button aria-label="Texture borders"><svg viewBox="0 0 24 24"><path d="M3.500 3.500H14V14H3.500Z" fill="none" stroke="#bbb"/><path d="M9 9H20V20H9ZM12 12H17V17H12Z" fill="#184e77" stroke="#71b8ee"/></svg></button>
                    <button aria-label="Pixel snap"><svg viewBox="0 0 24 24"><use href="#magnet" x="2" y="2" width="21" height="21"/></svg></button>
                    <button aria-label="RGB channels"><svg viewBox="0 0 24 24"><path d="M2 2H22V22H2Z"/><circle cx="12" cy="12" r="9" fill="#1a9222"/><path d="M10 3A9 9 0 0 0 10 21C8 16 8 8 10 3Z" fill="#d31924"/><path d="M14 3A9 9 0 0 1 14 21C17 16 17 8 14 3Z" fill="#2436e8"/></svg></button>
                    <button aria-label="Shade UVs"><svg viewBox="0 0 24 24"><path d="M3.500 3.500H14V14H3.500Z" fill="none" stroke="#bbb"/><path d="M9 9H20V20H9Z" fill="#2b6591" stroke="#71b8ee"/></svg></button>
                    <button aria-label="Alpha channel"><svg viewBox="0 0 24 24"><path d="M2 2H22V22H2Z"/><circle cx="12" cy="12" r="9" fill="#fff"/><path d="M12 3A9 9 0 0 1 21 12H12ZM12 21A9 9 0 0 1 3 12H12Z" fill="#ccc"/></svg></button>
                </div>
                <div class="group">
                    <button aria-label="Bake texture"><svg viewBox="0 0 24 24"><path d="M9 7L23 6L17 20L3 20Z" fill="#080808"/><path d="M11 8L14 7V10L11 11ZM17 9L20 8V11L17 12ZM8 14L12 13L11 16L8 17ZM15 15L18 14L17 18L14 18Z" fill="#eee"/><path d="M4 2V12M9 2V9" stroke="#d33"/><path d="M1 9H7L4 15ZM7 7H11L9 12Z" fill="#d33"/></svg></button>
                    <button aria-label="Update texture"><svg viewBox="0 0 24 24"><path d="M15 5C8 1 2 5 4 12M9 20C16 23 22 18 21 11" fill="none" stroke="#2ca83b" stroke-width="3"/><path d="M8 7L20 5L16 18L5 19Z" fill="#080808"/><path d="M9 8L12 7V10L9 11ZM15 8L18 7V10L15 11ZM7 14L11 13L10 16L7 17ZM13 14L16 13L15 16L12 17Z" fill="#eee"/></svg></button>
                    <button aria-label="Refresh"><svg viewBox="0 0 24 24"><path d="M9 5C1 6 1 17 9 18" fill="none" stroke="#2ca83b" stroke-width="3"/></svg></button>
                    <button aria-label="Use image ratio"><svg viewBox="0 0 24 24"><path d="M2 3H14V12H2Z" fill="#fff"/><path d="M2 3H6V7H2ZM6 7H10V12H6Z"/></svg></button>
                </div>
            </div>

            <svg class="uv-view" viewBox="662 107 610 469" preserveAspectRatio="xMinYMin slice" role="img" aria-label="UV layout">
                <defs>
                    <pattern id="brickSmall" href="#brick" patternTransform="scale(.5 .4)"/>
                    <linearGradient id="fadeDown" x2="0" y2="1"><stop offset="0" stop-opacity="0"/><stop offset=".5" stop-opacity=".3"/><stop offset="1" stop-opacity=".9"/></linearGradient>
                </defs>
                <rect x="888" y="302" width="86" height="82" fill="url(#brickSmall)"/>
                <rect x="888" y="302" width="86" height="82" filter="url(#grain)" opacity=".6"/>
                <rect x="888" y="302" width="86" height="82" fill="url(#fadeDown)"/>
                <g class="uv-edge">
                    <path d="M692.500 301.500H1259.500V385.500H692.500ZM764.500 385V300.500H1188.500V385M764 302.500H1139.500V385M764 317.500H1188M802.500 321V305.500H1090M1237.500 301V385M847 300.500H1015M794 316.500H1102M767 384.500H1139M847 302.500H1139"/>
                    <path d="M785.500 301V385M810.500 345V385M817.500 305V385M828.500 302V385M849.500 305V385M852.500 305V385M1009.500 305V385M1015.500 343V385M1036.500 302V385M1044.500 305V385M1060.500 302V385M1075.500 305V385M1085.500 351V385M1120.500 302V385"/>
                    <path class="faint" d="M714 302V385M767 303V386H1139M794 303V317M810 303V345M826 305V385M847 299V385M847 299H1015V343M1085.500 303V351M1102 303V317M802 321H1090V305M1259 302V385"/>
                </g>
            </svg>
        </div>
    </section>
</body>
</html>
```
FILE: styles.css
```css
* {
    box-sizing: border-box;
}
body {
    margin: 0;
    height: 100vh;
    display: flex;
    overflow: hidden;
    background: #444;
    color: #c8c8c8;
    font-family: "DejaVu Sans Condensed", "Noto Sans", sans-serif;
    font-size: 11px;
}
.defs {
    position: absolute;
}
button {
    flex: none;
    margin: 0;
    padding: 0;
    border: 1px solid transparent;
    border-radius: 3px;
    background: none;
    color: inherit;
    font: inherit;
}
button svg {
    display: block;
    width: 100%;
    height: 100%;
}

/* main window */
.main-window {
    flex: 0 0 51.42%;
    min-width: 0;
    display: flex;
    flex-direction: column;
    overflow: hidden;
    border-top: 1px solid #d8d8d8;
}
.menu {
    display: flex;
    flex: none;
    align-items: center;
    gap: 14px;
    white-space: nowrap;
}
.menu a {
    color: inherit;
    text-decoration: none;
}
.main-menu {
    height: 22px;
    padding-left: 14px;
}
.status-line {
    display: flex;
    flex: none;
    align-items: center;
    height: 28px;
}
.status-line button {
    width: 26px;
    height: 26px;
}
.status-line .gap {
    margin-left: 3px;
}
.sep {
    flex: none;
    width: 11px;
    height: 20px;
}
.panel-tools .sep {
    height: 16px;
}
.collapse {
    flex: none;
    width: 18px;
    height: 22px;
}
.mode-box {
    display: flex;
    flex: none;
    width: 102px;
    height: 20px;
    margin-left: -48px;
    border: 1px solid #2b2b2b;
    border-radius: 2px;
    background: #606060;
}
.mode-box select {
    flex: 1;
    min-width: 0;
    padding: 0 5px;
    border: 0;
    appearance: none;
    background: none;
    color: inherit;
    font: inherit;
}
.mode-box svg {
    width: 16px;
    height: 18px;
}
button.on {
    border-color: #2e2e2e;
    background: #5a5a5a;
}
button.light {
    background: #777;
}
button.cool {
    background: #66717c;
}
button.dark {
    background: #222;
}

/* shelf */
.shelf-tabs {
    display: flex;
    flex: none;
    align-items: flex-end;
    height: 26px;
    margin-top: 1px;
    border-top: 1px solid #333;
    border-bottom: 1px solid #5d5d5d;
}
.shelf-tabs button {
    height: 17px;
    padding: 0 11px;
    border: 1px solid #2f2f2f;
    border-width: 1px 1px 0 0;
    border-radius: 0;
    background: #494949;
}
.shelf-tabs button:first-child {
    margin-left: -22px;
}
.shelf-tabs button[aria-selected="true"] {
    height: 20px;
    padding: 0 10px;
    border-radius: 3px 3px 0 0;
    background: #5f5f5f;
}
.shelf {
    display: flex;
    flex: none;
    align-items: center;
    height: 42px;
    margin-left: -17px;
    border-top: 1px solid #2d2d2d;
}
.shelf button {
    width: 35px;
    height: 34px;
}

/* panel */
.panel-menu {
    height: 27px;
    margin-left: -5px;
    padding-top: 8px;
    border-top: 1px solid #2b2b2b;
    box-shadow: inset 0 2px #444, inset 0 3px #2b2b2b, inset 0 5px #444, inset 0 6px #333;
}
.panel-tools {
    display: flex;
    flex: none;
    align-items: center;
    height: 21px;
    margin-left: -1px;
    padding-bottom: 1px;
}
.panel-tools button {
    width: 18px;
    height: 18px;
    margin: 0 1px;
}
.viewport {
    flex: 1;
    display: block;
    width: 100%;
    min-height: 0;
    background: linear-gradient(#7f93aa, #6a7988 25%, #3c444d 65%, #1d1f22);
}
.edge {
    fill: none;
    stroke: #3fe795;
}
.axis {
    font-family: "DejaVu Sans", sans-serif;
    font-size: 10px;
    font-weight: bold;
}

/* uv editor window */
.uv-window {
    flex: 1;
    min-width: 0;
    display: flex;
    flex-direction: column;
    padding-left: 6px;
    border-left: 1px solid #111;
    background: linear-gradient(90deg, #ddd 1px, #333 1px, #222 4px, #ddd 4px, #888 5px, #333 5px);
}
.title-bar {
    display: flex;
    flex: none;
    align-items: center;
    height: 27px;
    margin-left: -5px;
    padding-left: 9px;
    border-bottom: 1px solid #aaa;
    background:
        radial-gradient(ellipse 90px 26px at 65px 14px, #a4a4a4 60%, transparent),
        linear-gradient(90deg, #777, #555 150px, #3e3e3e 190px, #333 270px, #484848 330px, #2b2b2b 420px, #484848);
}
.app-icon {
    width: 12px;
    height: 16px;
}
.title-bar h1 {
    flex: 1;
    margin: 0 0 0 6px;
    color: #000;
    font: 12px "Open Sans", sans-serif;
}
.window-buttons {
    display: flex;
    align-self: flex-start;
    height: 18px;
    margin-right: -8px;
    border: 1px solid #ccc;
    border-top: 0;
    border-radius: 0 0 4px 4px;
}
.window-buttons button {
    width: 27px;
    padding: 1px 6px 3px;
    border: 0;
    border-right: 1px solid #bbb;
    border-radius: 0;
    background: linear-gradient(#999, #555 50%, #333 50%, #777);
}
.window-buttons .close {
    width: 46px;
    background: linear-gradient(#d99, #c04a38 50%, #a01a08 50%, #d06040);
}
.uv-body {
    flex: 1;
    min-height: 0;
    display: flex;
    flex-direction: column;
    border-top: 1px solid #222;
    border-left: 1px solid #777;
    background: #444;
}
.uv-menu {
    height: 22px;
    padding-left: 9px;
}
.uv-tools {
    display: flex;
    flex: none;
    height: 57px;
    padding-left: 1px;
    overflow: hidden;
    border-bottom: 1px solid #666;
}
.group {
    display: grid;
    flex: none;
    grid-template-rows: 27px 27px;
    grid-auto-columns: 27px;
    grid-auto-flow: column;
    align-content: end;
    padding-left: 10px;
    background:
        linear-gradient(#888, #888) 4px 25px / 3px 8px no-repeat,
        linear-gradient(#777, #777) 5px 4px / 1px 50px no-repeat;
}
.group button {
    width: 26px;
    height: 26px;
}
.group .on {
    border-color: #757575;
    background: #4a4a4a;
}
.group .light {
    border-color: #2e2e2e;
    background: #606060;
}
/* the first group has its odd third button on the top row */
.group:first-child button:nth-child(2),
.group:first-child button:nth-child(3) {
    grid-row: 1;
}
.group:first-child button:nth-child(4) {
    grid-area: 2 / 1;
}
.group:first-child button:nth-child(5) {
    grid-area: 2 / 2;
}
.uv-view {
    flex: 1;
    display: block;
    width: 100%;
    min-height: 0;
    background: #a0a0a0;
}
.uv-edge {
    fill: none;
    stroke: #fff;
    shape-rendering: crispEdges;
}
.faint {
    stroke: #d0d0d0;
}
```
